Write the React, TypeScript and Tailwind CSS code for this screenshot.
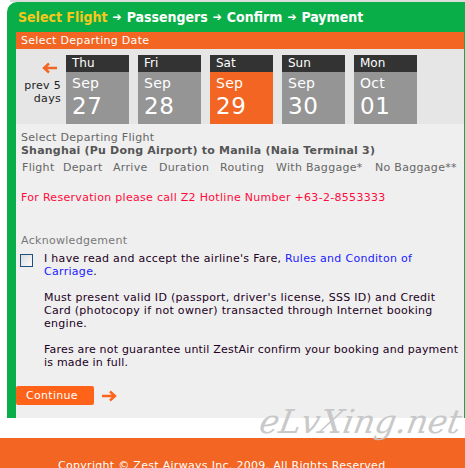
import React from "react";

const days = [
  { d: "Thu", m: "Sep", n: "27", sel: false },
  { d: "Fri", m: "Sep", n: "28", sel: false },
  { d: "Sat", m: "Sep", n: "29", sel: true },
  { d: "Sun", m: "Sep", n: "30", sel: false },
  { d: "Mon", m: "Oct", n: "01", sel: false },
];

function Arrow({ left = false, className = "" }: { left?: boolean; className?: string }) {
  return (
    <svg width="16" height="12" viewBox="0 0 16 12" className={className} style={left ? { transform: "scaleX(-1)" } : undefined}>
      <path d="M1 6H14M9 1.5L14 6L9 10.5" fill="none" stroke="currentColor" strokeWidth="2.4" strokeLinecap="butt" strokeLinejoin="miter" />
    </svg>
  );
}

export default function App() {
  const font = { fontFamily: '"DejaVu Sans", Verdana, sans-serif' };
  return (
    <div className="relative w-[465px] h-[468px] overflow-hidden bg-white" style={font}>
      <div className="h-[2px] bg-[#dcdcdc] ml-[10px]" />
      <div className="ml-[7px] w-[458px] bg-[#0aae48] rounded-tl-[10px] pl-[9px] pr-[1px]">
        <div
          className="h-[30px] flex items-center -ml-[9px] pl-[11px] text-[14px] font-bold text-white leading-none"
          style={{ fontFamily: '"DejaVu Sans Condensed", "DejaVu Sans", sans-serif' }}
        >
          <span className="text-[#f7c81c]">Select Flight</span>
          <span className="mx-[5px] text-[12px]">➔</span>
          <span>Passengers</span>
          <span className="mx-[5px] text-[12px]">➔</span>
          <span>Confirm</span>
          <span className="mx-[5px] text-[12px]">➔</span>
          <span>Payment</span>
        </div>
        <div className="h-[17px] bg-[#f26522] text-white text-[11px] tracking-[0.3px] leading-[17px] pl-[5px]">
          Select Departing Date
        </div>
        <div className="h-[75px] bg-[#e6e6e6] flex pt-[6px]">
          <div className="w-[50px] flex flex-col items-end pr-[5px] text-[11px] tracking-[0.3px] leading-[13px] text-[#222]">
            <Arrow left className="text-[#f26522] mt-[7px] mr-[3px]" />
            <span className="mt-[5px]">prev 5</span>
            <span>days</span>
          </div>
          <div className="flex gap-[9px]">
            {days.map((x) => (
              <div key={x.n} className="w-[63px] flex flex-col">
                <div className="h-[17px] bg-[#333333] text-white text-[12px] leading-[17px] pl-[6px]">{x.d}</div>
                <div className={"flex-1 text-white pl-[6px] " + (x.sel ? "bg-[#f26522]" : "bg-[#959595]")}>
                  <div className="text-[14px] leading-[14px] mt-[4px] tracking-[0.3px]">{x.m}</div>
                  <div className="text-[23px] leading-[23px] mt-[5px] tracking-[0.5px]">{x.n}</div>
                </div>
              </div>
            ))}
          </div>
        </div>
        <div className="h-[294px] bg-[#efefef] pl-[5px] pt-[7px] text-[11px] leading-[13px] tracking-[0.3px]">
          <div className="text-[#666]">Select Departing Flight</div>
          <div className="text-[#555] font-bold tracking-[0.2px]">Shanghai (Pu Dong Airport) to Manila (Naia Terminal 3)</div>
          <div className="flex text-[#666] mt-[4px] pl-[1px]">
            <span className="w-[41px]">Flight</span>
            <span className="w-[50px]">Depart</span>
            <span className="w-[46px]">Arrive</span>
            <span className="w-[61px]">Duration</span>
            <span className="w-[56px]">Routing</span>
            <span className="w-[99px]">With Baggage*</span>
            <span>No Baggage**</span>
          </div>
          <div className="text-[#ff0a3c] mt-[17px]">For Reservation please call Z2 Hotline Number +63-2-8553333</div>
          <div className="text-[#777] mt-[30px]">Acknowledgement</div>
          <div className="flex mt-[5px]">
            <div className="w-[13px] h-[13px] mt-[2px] ml-[-1px] shrink-0 border border-[#1c5180] bg-gradient-to-br from-[#dcdcdc] to-[#fafafa]" />
            <div className="ml-[11px] text-[#220022] w-[430px] shrink-0">
              <p>
                I have read and accept the airline's Fare, <span className="text-[#1a1aff]">Rules and Conditon of<br />Carriage</span>.
              </p>
              <p className="mt-[13px]">
                Must present valid ID (passport, driver's license, SSS ID) and Credit
                <br />
                Card (photocopy if not owner) transacted through Internet booking
                <br />
                engine.
              </p>
              <p className="mt-[13px] tracking-[0.2px]">
                Fares are not guarantee until ZestAir confirm your booking and payment
                <br />
                is made in full.
              </p>
            </div>
          </div>
          <div className="flex items-center mt-[17px] -ml-[5px]">
            <div className="w-[78px] h-[19px] bg-[#ff6319] rounded-[2px] text-white text-[11px] leading-[19px] pl-[10px]">Continue</div>
            <Arrow className="ml-[7px] text-[#ff6319]" />
          </div>
        </div>
      </div>
      <div className="h-[20px]" />
      <div className="h-[30px] bg-[#f26522] text-white text-[11px] tracking-[0.3px] pt-[21px] pl-[58px] leading-[13px] whitespace-nowrap">
        Copyright © Zest Airways Inc. 2009. All Rights Reserved
      </div>
      <div
        className="absolute left-[260px] top-[405px] text-[33px] italic text-[#c4c4c4] opacity-90 leading-none"
        style={{ fontFamily: '"DejaVu Serif", serif', transform: "skewX(-10deg)" }}
      >
        eLvXing.net
      </div>
    </div>
  );
}
